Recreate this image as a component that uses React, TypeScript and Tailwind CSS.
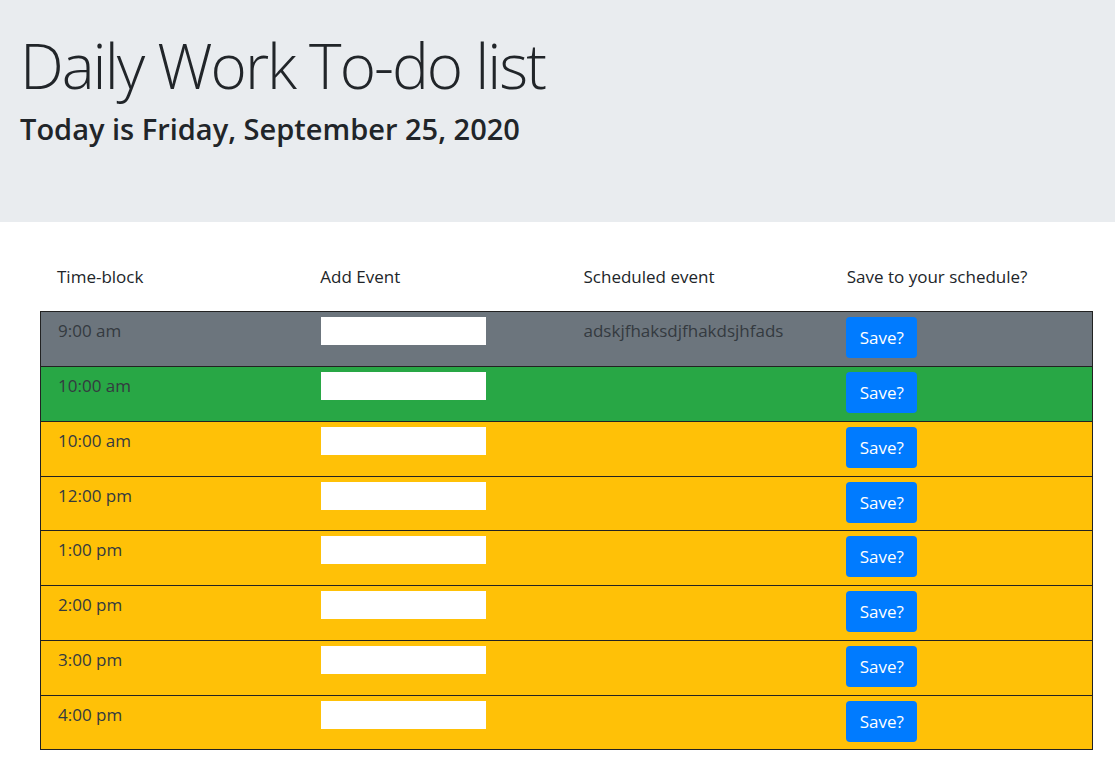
const hours = [
  { time: "9:00 am", tone: "past", saved: "adskjfhaksdjfhakdsjhfads" },
  { time: "10:00 am", tone: "present", saved: "" },
  { time: "10:00 am", tone: "future", saved: "" },
  { time: "12:00 pm", tone: "future", saved: "" },
  { time: "1:00 pm", tone: "future", saved: "" },
  { time: "2:00 pm", tone: "future", saved: "" },
  { time: "3:00 pm", tone: "future", saved: "" },
  { time: "4:00 pm", tone: "future", saved: "" },
];

const toneClass: Record<string, string> = {
  past: "bg-[#6c757d]",
  present: "bg-[#28a745]",
  future: "bg-[#ffc107]",
};

export default function App() {
  return (
    <div className="min-h-screen bg-white text-[#212529] font-['Open_Sans',sans-serif]">
      <header className="h-[222px] bg-[#e9ecef] px-5 pt-[34px]">
        <h1 className="text-[62px] font-light leading-none tracking-[-2px]">Daily Work To-do list</h1>
        <h2 className="mt-[16px] text-[29px] font-semibold leading-[1.2]">Today is Friday, September 25, 2020</h2>
      </header>

      <main className="px-10 pt-[43px]">
        <div className="grid w-[1053px] grid-cols-4 pb-[22px] text-[17px] leading-6">
          <div className="pl-[17px]">Time-block</div>
          <div className="pl-[17px]">Add Event</div>
          <div className="pl-[17px]">Scheduled event</div>
          <div className="pl-[17px]">Save to your schedule?</div>
        </div>

        <div className="w-[1053px] border-b border-[#222]">
          {hours.map((h, i) => (
            <div
              key={i}
              className={`grid grid-cols-4 ${i % 4 === 3 ? "h-[54px]" : "h-[55px]"} border-x border-t border-[#222] text-[17px] leading-6 ${toneClass[h.tone]}`}
            >
              <div className="pl-[17px] pt-[7px] text-[#343a40]">{h.time}</div>
              <div className="pl-[17px] pt-[5px]">
                <input type="text" className="h-[28px] w-[165px] bg-white outline-none" />
              </div>
              <div className="pl-[17px] pt-[7px] text-[#343a40]">{h.saved}</div>
              <div className="pl-[17px] pt-[5px]">
                <button className="h-[41px] w-[71px] rounded-[4px] bg-[#007bff] text-[17px] text-white">Save?</button>
              </div>
            </div>
          ))}
        </div>
      </main>
    </div>
  );
}
